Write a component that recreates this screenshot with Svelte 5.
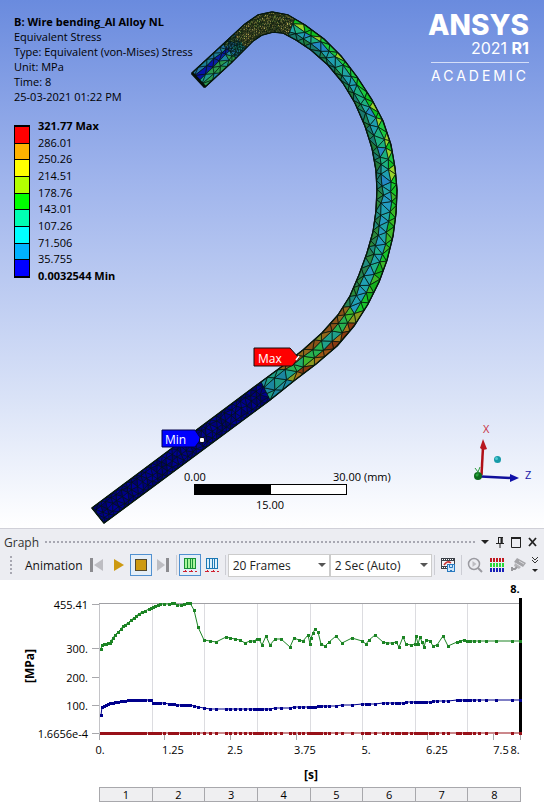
<script lang="ts">
  type Point = [number, number];

  const details = [
    "Equivalent Stress",
    "Type: Equivalent (von-Mises) Stress",
    "Unit: MPa",
    "Time: 8",
    "25-03-2021 01:22 PM",
  ];

  const bands = ["red", "orange", "yellow", "lime", "green", "mint", "cyan", "sky", "blue"];
  const levels = [
    "321.77 Max",
    "286.01",
    "250.26",
    "214.51",
    "178.76",
    "143.01",
    "107.26",
    "71.506",
    "35.755",
    "0.0032544 Min",
  ];

  // Cross sections of the wire: outer x, outer y, inner x, inner y
  const sections = [
    [192, 73, 205, 87],
    [218, 49, 231, 63],
    [232, 36, 244, 50],
    [245, 24, 253, 41],
    [258, 15, 262, 35],
    [272, 12, 273, 32],
    [288, 15, 283, 33],
    [305, 25, 296, 40],
    [324, 39, 311, 50],
    [341, 56, 328, 65],
    [357, 77, 343, 83],
    [372, 100, 355, 103],
    [383, 121, 365, 126],
    [391, 145, 372, 148],
    [395, 168, 376, 170],
    [397, 190, 377, 190],
    [396, 213, 376, 211],
    [393, 236, 373, 232],
    [387, 260, 367, 253],
    [379, 282, 359, 275],
    [368, 304, 350, 296],
    [354, 326, 338, 315],
    [337, 346, 322, 333],
    [316, 364, 303, 350],
    [295, 380, 284, 365],
    [270, 400, 261, 382],
    [104, 523, 92, 508],
  ];

  const zones = [
    { from: 0, to: 1.4, steps: 5, rows: [0, 0.25, 0.5, 0.8, 1], line: 0.6 },
    { from: 1.4, to: 6.4, steps: 27, rows: [0, 0.1, 0.22, 0.35, 0.48, 0.6, 0.74, 0.88, 1], line: 0.6 },
    { from: 6.4, to: 25, steps: 40, rows: [0, 0.3, 0.72, 1], line: 0.7 },
    { from: 25, to: 26, steps: 34, rows: [0, 0.2, 0.5, 0.8, 1], line: 0.5 },
  ];

  let seed = 7;
  function random() {
    seed = (seed * 16807) % 2147483647;
    return seed / 2147483647;
  }

  function pick(colors: string[]) {
    return colors[Math.floor(random() * colors.length)];
  }

  function at(s: number, u: number): Point {
    const i = Math.min(Math.floor(s), sections.length - 2);
    const f = s - i;
    const [ox, oy, ix, iy] = sections[i].map((v, k) => v + (sections[i + 1][k] - v) * f);
    return [ox + (ix - ox) * u, oy + (iy - oy) * u];
  }

  function stressColor(s: number, u: number) {
    if (s > 25) return pick(["#00007c", "#000088", "#00006c", "#000092"]);
    if (s < 1.4) {
      if (u > 0.25 && u < 0.55) return pick(["#0a1fa0", "#0612a8"]);
      return u < 0.3 ? pick(["#1c7f9a", "#2273a8"]) : pick(["#1f9a8a", "#2a9a50", "#1c88a4"]);
    }
    if (s < 2.2) return u > 0.5 ? pick(["#1d6fa0", "#1b8a80"]) : pick(["#1b5f80", "#5a8048"]);
    if (s < 6.4) return pick(["#a09c44", "#b5a950", "#7d9440", "#a08e44", "#c0b45c"]);
    if (s > 24) return pick(["#1b86a0", "#2390a0", "#1f9c86"]);
    if (s > 20.5) {
      if (u < 0.3) return pick(["#9c5414", "#a5741c", "#8a9a20", "#8a3a10"]);
      if (u > 0.72) return pick(["#92681c", "#7a8a24", "#8a5218"]);
      return pick(["#22ad6c", "#20a08c", "#3fb82c", "#28b050"]);
    }
    if (s > 15) {
      if (u < 0.3) return pick(["#18c42c", "#14b01c", "#3cb828"]);
      if (u > 0.72) return pick(["#258250", "#2a8a3c", "#208c80"]);
      return pick(["#20a4a8", "#249ac0", "#1fb08c", "#20a0b4"]);
    }
    if (u < 0.3) return pick(["#14cc28", "#10c020", "#1cc840", "#98d42c"]);
    if (u > 0.72) return pick(["#1f7a3c", "#1c8458", "#1a7a70"]);
    return pick(["#1f9eb0", "#2488c4", "#1cb080", "#22a4a4"]);
  }

  // Each cell of the jittered grid is split into two triangles
  function buildZone({ from, to, steps, rows, line }: (typeof zones)[number]) {
    const grid = Array.from({ length: steps + 1 }, (_, i) =>
      rows.map((u, r) => {
        const rim = r === 0 || r === rows.length - 1;
        const end = i === 0 || i === steps;
        const shift = end ? 0 : (r % 2) * 0.5 + (random() - 0.5) * 0.4;
        const s = Math.min(to, from + ((to - from) * (i + shift)) / steps);
        return at(Math.max(from, s), rim ? u : u + (random() - 0.5) * 0.12);
      }),
    );
    const cells = [];
    for (let i = 0; i < steps; i++) {
      for (let r = 0; r < rows.length - 1; r++) {
        const s = from + ((to - from) * (i + 0.5)) / steps;
        const u = (rows[r] + rows[r + 1]) / 2;
        const [a, b, c, d] = [grid[i][r], grid[i + 1][r], grid[i + 1][r + 1], grid[i][r + 1]];
        const split = r % 2 ? [[a, b, c], [a, c, d]] : [[a, b, d], [b, c, d]];
        for (const t of split) {
          cells.push({ points: t.join(" "), fill: stressColor(s, u), line });
        }
      }
    }
    return cells;
  }

  const mesh = zones.flatMap(buildZone);
  const outline = [
    ...sections.map(([x, y]) => `${x},${y}`),
    ...sections.map(([, , x, y]) => `${x},${y}`).reverse(),
  ].join(" ");

  const maxSeries: Point[] = [
    [101, 69], [102, 65], [104, 64], [106, 64], [108, 63], [110, 63], [111, 61], [113, 58], [115, 55],
    [118, 52], [121, 49], [123, 46], [125, 45], [128, 43], [131, 40], [134, 38], [136, 36], [139, 34],
    [142, 32], [145, 31], [149, 29], [151, 28], [153, 27], [155, 26], [158, 25], [160, 24], [164, 24],
    [169, 24], [172, 23], [174, 23], [177, 25], [181, 25], [184, 24], [187, 23], [190, 23], [194, 30],
    [198, 47], [204, 60], [210, 61], [216, 62], [226, 57], [230, 58], [235, 59], [240, 60], [245, 63],
    [250, 61], [254, 61], [257, 59], [259, 59], [262, 65], [266, 56], [270, 65], [275, 59], [281, 59],
    [290, 67], [294, 58], [299, 60], [303, 61], [308, 55], [310, 64], [311, 58], [313, 53], [315, 49],
    [318, 52], [321, 64], [325, 66], [329, 62], [336, 56], [342, 63], [352, 58], [362, 61], [366, 64],
    [369, 60], [375, 55], [383, 62], [387, 63], [392, 63], [396, 62], [399, 67], [403, 57], [406, 64],
    [411, 65], [415, 64], [416, 56], [418, 64], [420, 57], [422, 62], [424, 67], [426, 60], [430, 61],
    [433, 66], [437, 65], [443, 56], [448, 66], [457, 62], [460, 61], [464, 60], [467, 61], [470, 61],
    [474, 61], [479, 61], [486, 61], [496, 61], [512, 61], [520, 61],
  ];

  const averageKeys: Point[] = [
    [101, 135], [102, 127], [105, 125], [108, 124], [115, 122], [130, 120], [151, 120], [152, 123],
    [160, 123], [180, 125], [192, 125], [204, 128], [212, 129], [260, 129], [300, 127], [330, 126],
    [362, 124], [420, 122], [467, 120], [520, 120],
  ];

  function averageAt(x: number) {
    const i = Math.max(1, averageKeys.findIndex(([kx]) => kx >= x));
    const [x0, y0] = averageKeys[i - 1];
    const [x1, y1] = averageKeys[i];
    return Math.round(y0 + ((y1 - y0) * (x - x0)) / (x1 - x0));
  }

  const series = [
    { name: "max", points: maxSeries },
    { name: "average", points: maxSeries.map(([x]): Point => [x, averageAt(x)]) },
    { name: "min", points: maxSeries.map(([x]): Point => [x, 153]) },
  ];

  const yTicks = [
    { y: 24, label: "455.41" },
    { y: 68, label: "300." },
    { y: 97, label: "200." },
    { y: 125, label: "100." },
    { y: 153, label: "1.6656e-4" },
  ];
  const xTicks = [
    { x: 99, tx: 100, label: "0." },
    { x: 164, tx: 173, label: "1.25" },
    { x: 230, tx: 235, label: "2.5" },
    { x: 296, tx: 305, label: "3.75" },
    { x: 362, tx: 366, label: "5." },
    { x: 427, tx: 437, label: "6.25" },
    { x: 493, tx: 501, label: "7.5" },
    { x: 520, tx: 515, label: "8." },
  ];
  const gridLines = [152, 204, 257, 310, 362, 415, 467];
  const steps = [1, 2, 3, 4, 5, 6, 7, 8];

  let frames = $state("20 Frames");
  let duration = $state("2 Sec (Auto)");
</script>

<main class="workbench">
  <section class="viewport">
    <svg class="scene" viewBox="0 0 544 528" role="img" aria-label="Wire stress plot">
      <polygon points={outline} fill="#123" stroke="#06120c" stroke-width="1.4" stroke-linejoin="round" />
      {#each mesh as cell}
        <polygon points={cell.points} fill={cell.fill} stroke="#04140c" stroke-width={cell.line} stroke-linejoin="round" />
      {/each}
      <polygon points={outline} fill="none" stroke="#06180c" stroke-width="1.2" stroke-linejoin="round" />
      <path d="M192 73L205 87" stroke="#051008" stroke-width="3" />

      <path d="M254 348H290L299 358L292 366H254Z" fill="#f00" stroke="#111" />
      <path d="M296 360L299 356" stroke="#fff" stroke-width="1.5" />
      <text x="258" y="363" class="flag">Max</text>
      <path d="M162 430H195L201 439L195 447H162Z" fill="#00f" stroke="#00004c" />
      <circle cx="202" cy="440" r="3" fill="#111" />
      <rect x="200" y="438" width="4" height="4" rx="1" fill="#fff" />
      <text x="165" y="444" class="flag">Min</text>

      <rect x="194.5" y="484.5" width="152" height="10" fill="#fff" stroke="#000" />
      <rect x="194" y="484" width="77" height="11" />
      <text x="184" y="481">0.00</text>
      <text x="333" y="481">30.00 (mm)</text>
      <text x="256" y="509">15.00</text>

      <path d="M481.500 475L483 447" stroke="#b01018" stroke-width="2.500" />
      <path d="M483 439L487 449Q483 451 480 448Z" fill="#b81820" />
      <path d="M481 476.500L511 478" stroke="#10109c" stroke-width="2.500" />
      <path d="M510 474L519 478L510 482Z" fill="#1010a8" />
      <circle cx="478" cy="476" r="4" fill="#0c6a1c" />
      <circle cx="477" cy="475" r="1.500" fill="#28a83c" />
      <path d="M475 468L478 472L480 467M478 472V475" fill="none" stroke="#2a9a3c" />
      <circle cx="497.500" cy="459.500" r="3.500" fill="#159aa8" />
      <circle cx="496.500" cy="458.500" r="1.500" fill="#50c8d0" />
      <text x="483" y="433" class="axis-x">X</text>
      <text x="525" y="479" class="axis-z">Z</text>
    </svg>

    <div class="overlay">
      <div class="top">
        <div class="info">
          <strong>B: Wire bending_Al Alloy NL</strong>
          {#each details as line}
            <span>{line}</span>
          {/each}
        </div>
        <div class="brand">
          <span class="brand-name">ANSYS</span>
          <span class="brand-release">2021 <b>R1</b></span>
          <span class="brand-edition">ACADEMIC</span>
        </div>
      </div>
      <div class="legend">
        <div class="scale">
          {#each bands as band}
            <i class={band}></i>
          {/each}
        </div>
        <div class="levels">
          {#each levels as level}
            <span>{level}</span>
          {/each}
        </div>
      </div>
    </div>
  </section>

  <section class="graph">
    <header class="titlebar">
      <span>Graph</span>
      <div class="grip"></div>
      <button aria-label="Menu">
        <svg width="10" height="14"><path d="M1 5H9L5 9Z" fill="#222" /></svg>
      </button>
      <button aria-label="Pin">
        <svg width="10" height="14" fill="none" stroke="#222"><path d="M3 2.500H8M3.500 2V8M7 2V8M1 8.500H9M5 9V13" /><path d="M6.500 3V8" stroke-width="2" /></svg>
      </button>
      <button aria-label="Maximize">
        <svg width="12" height="14"><path d="M1.500 3V12.500H10.500V3Z" fill="none" stroke="#222" /><path d="M1 3H11" stroke="#222" stroke-width="2" /></svg>
      </button>
      <button aria-label="Close">
        <svg width="11" height="14"><path d="M2 3L9 11M9 3L2 11" stroke="#222" stroke-width="1.800" /></svg>
      </button>
    </header>

    <div class="toolbar">
      <div class="handle"></div>
      <span class="caption">Animation</span>
      <button class="tool" aria-label="Previous">
        <svg width="16" height="16"><path d="M1 1H4V15H1Z" fill="#8c8c90" /><path d="M14 2V14L5 8Z" fill="#bdbdc2" /></svg>
      </button>
      <button class="tool" aria-label="Play">
        <svg width="16" height="16"><path d="M3 2L13 8L3 14Z" fill="#cd9a12" /></svg>
      </button>
      <button class="tool active" aria-label="Stop">
        <svg width="16" height="16"><rect x="2.500" y="2.500" width="11" height="11" fill="#cd9a12" stroke="#54482c" /></svg>
      </button>
      <button class="tool" aria-label="Next">
        <svg width="16" height="16"><path d="M11 1H14V15H11Z" fill="#8c8c90" /><path d="M2 2V14L10 8Z" fill="#bdbdc2" /></svg>
      </button>
      <i class="rule"></i>
      <button class="tool active" aria-label="Distributed">
        <svg width="16" height="16"><rect x="2.500" y="1.500" width="11" height="10" fill="#a8f59c" stroke="#189038" /><path d="M5.500 1V12M8.500 1V12M10.500 1V12" stroke="#189038" /><path d="M1 14.500H5M7 14.500H11M13 14.500H15M3.500 13V15M9.500 13V15" stroke="#d02030" /></svg>
      </button>
      <button class="tool" aria-label="Result sets">
        <svg width="16" height="16"><rect x="2.500" y="1.500" width="11" height="10" fill="#dff1fb" stroke="#1c78b4" /><path d="M5.500 1V12M8.500 1V12M10.500 1V12" stroke="#1c78b4" /><path d="M1 14.500H5M7 14.500H11M13 14.500H15M3.500 13V15M9.500 13V15" stroke="#d02030" /></svg>
      </button>
      <i class="rule"></i>
      <div class="field">
        <select aria-label="Frames" bind:value={frames}>
          <option>20 Frames</option>
        </select>
      </div>
      <div class="field">
        <select aria-label="Duration" bind:value={duration}>
          <option>2 Sec (Auto)</option>
        </select>
      </div>
      <i class="rule"></i>
      <button class="tool" aria-label="Export video">
        <svg width="16" height="16"><rect x="1" y="1" width="14" height="11" fill="#3b4048" /><path d="M2 2.500H14M2 10.500H7" stroke="#fff" stroke-dasharray="1 1" /><rect x="2" y="4" width="12" height="5" fill="#f4f4f6" /><path d="M4 8Q7 3 11 6" fill="none" stroke="#c83030" stroke-width="1.500" /><rect x="7.500" y="7.500" width="7" height="7" fill="#cfe6f8" stroke="#2a7ac0" /><path d="M9.500 8V10.500H12.500V8M10 13.500H12" fill="none" stroke="#2a7ac0" /></svg>
      </button>
      <i class="rule"></i>
      <button class="tool" aria-label="Zoom to fit">
        <svg width="16" height="16" fill="none" stroke="#9a9aa0"><circle cx="7" cy="7" r="5.500" stroke-width="1.500" /><path d="M11 11L15 15" stroke-width="2" /><path d="M5.500 4L9.500 7L5.500 10Z" fill="#bdbdc2" stroke="none" /></svg>
      </button>
      <button class="tool" aria-label="Contours">
        <svg width="16" height="16" stroke-width="4" stroke-dasharray="2 1"><path d="M1 3H15" stroke="#c01820" /><path d="M1 8H15" stroke="#28d838" /><path d="M1 13H15" stroke="#1820b8" /></svg>
      </button>
      <button class="tool" aria-label="Probe">
        <svg width="16" height="16"><path d="M6 1L15 6L12 10L3 5Z" fill="#a4a4a8" /><path d="M4 6L10 10L8 12L3 9Z" fill="#b4b4b8" /><path d="M8 4L13 7" stroke="#d8d8dc" /><path d="M6 10L4 12H1M1 10V14" fill="none" stroke="#98989c" stroke-width="2" /></svg>
      </button>
      <button class="more" aria-label="More tools">
        <svg width="8" height="18"><path d="M1 1L4 4L7 1M1 4L4 7L7 4" fill="none" stroke="#333" /><path d="M1 13H7L4 16Z" fill="#222" /></svg>
      </button>
    </div>

    <svg class="chart" viewBox="0 0 544 207" role="img" aria-label="Stress over time">
      {#each gridLines as x}
        <path d="M{x}.5 24V153" stroke="#dcdce0" />
      {/each}
      <path d="M99.500 24V160" stroke="#c4c4c8" />
      <path d="M99 23.500H520" stroke="#a0a0a4" />
      {#each yTicks as tick}
        <path d="M92 {tick.y}.5H99" stroke="#a8a8ac" />
        <text x="88" y={tick.y + 5} text-anchor="end">{tick.label}</text>
      {/each}
      {#each xTicks as tick}
        <path d="M{tick.x}.5 154V160" stroke="#a8a8ac" />
        <text x={tick.tx} y="174" text-anchor="middle">{tick.label}</text>
      {/each}
      <rect x="519" y="18" width="3" height="135" />
      <text x="515" y="13" text-anchor="middle" class="bold">8.</text>
      {#each series as line}
        <g class={line.name}>
          <polyline points={line.points.join(" ")} />
          {#each line.points as [x, y]}
            <rect x={x - 1} y={y - 1} width="3" height="3" />
          {/each}
        </g>
      {/each}
      <text class="bold title" text-anchor="middle" transform="translate(34 86) rotate(-90)">[MPa]</text>
      <text class="bold title" text-anchor="middle" x="311" y="199">[s]</text>
    </svg>

    <div class="steps">
      {#each steps as step}
        <span>{step}</span>
      {/each}
    </div>
  </section>
</main>

<style>
  :global(body) {
    margin: 0;
    background: #fff;
  }

  .workbench {
    font-family: "Open Sans", "Noto Sans", sans-serif;
    font-size: 11px;
    line-height: 15px;
    color: #000;
  }

  .viewport {
    display: grid;
    background: linear-gradient(#6a8bde, #9fb4ec 34%, #d9e2f7 75%, #fff);
  }

  .scene,
  .overlay {
    grid-area: 1 / 1;
  }

  .scene,
  .chart {
    display: block;
    width: 100%;
    height: auto;
  }

  .flag {
    font-size: 12px;
    fill: #fff;
  }

  .axis-x {
    fill: #c83040;
  }

  .axis-z {
    fill: #2020a8;
  }

  .overlay {
    padding: 14px 15px 0 14px;
  }

  .top {
    display: flex;
    justify-content: space-between;
  }

  .info {
    display: flex;
    flex-direction: column;
  }

  .brand {
    display: flex;
    flex-direction: column;
    align-items: flex-end;
    font-family: Inter, "Open Sans", sans-serif;
    color: #fff;
  }

  .brand-name {
    font-size: 28px;
    line-height: 22px;
    font-weight: 800;
  }

  .brand-release {
    font-size: 16px;
    line-height: 24px;
  }

  .brand-edition {
    margin-top: 2px;
    padding-top: 4px;
    border-top: 1px solid #d4def8;
    font-size: 14px;
    line-height: 18px;
    letter-spacing: 3px;
  }

  .legend {
    display: flex;
    gap: 8px;
    margin-top: 14px;
  }

  .scale {
    display: flex;
    flex-direction: column;
    gap: 1px;
    width: 14px;
    height: 149px;
    margin-top: 7px;
    border: 1px solid #000;
    border-width: 2px 1px;
    background: #000;
  }

  .scale i {
    flex: 1;
  }

  .red { background: #f00; }
  .orange { background: #ffb200; }
  .yellow { background: #ff0; }
  .lime { background: #b2ff00; }
  .green { background: #0f0; }
  .mint { background: #00ffb2; }
  .cyan { background: #0ff; }
  .sky { background: #00b2ff; }
  .blue { background: #00f; }

  .levels {
    display: flex;
    flex-direction: column;
    justify-content: space-between;
    height: 165px;
  }

  .levels span:first-child,
  .levels span:last-child {
    font-weight: 700;
  }

  .titlebar,
  .toolbar {
    display: flex;
    align-items: center;
    background: #ecedf2;
    color: #333;
  }

  .titlebar {
    gap: 5px;
    height: 20px;
    padding: 3px 6px 0 4px;
    border-top: 1px solid #d0d0d8;
    font-size: 12px;
  }

  button {
    display: flex;
    flex: none;
    justify-content: center;
    align-items: center;
    padding: 0;
    border: 0;
    background: none;
  }

  .grip,
  .handle {
    background-image: radial-gradient(#a8a8b2 1px, transparent 1px);
    background-size: 4px 4px;
  }

  .grip {
    flex: 1;
    height: 5px;
  }

  .toolbar {
    height: 26px;
    padding: 0 4px 2px 9px;
  }

  .handle {
    width: 5px;
    height: 20px;
  }

  .caption {
    margin: 0 3px 0 11px;
    font-size: 12px;
    color: #111;
  }

  .tool {
    box-sizing: border-box;
    width: 22px;
    height: 22px;
  }

  .active {
    border: 1px solid #5090d0;
    background: #e4eef8;
  }

  .rule {
    flex: none;
    width: 1px;
    height: 20px;
    margin: 0 2px;
    background: #cccdd4;
  }

  .field {
    display: flex;
    flex: 1;
    align-items: center;
    position: relative;
    min-width: 0;
  }

  .field::after {
    content: "";
    position: absolute;
    right: 4px;
    border: 4px solid transparent;
    border-top-color: #555;
    border-bottom: 0;
    pointer-events: none;
  }

  select {
    width: 100%;
    height: 23px;
    padding: 0 14px 0 4px;
    border: 1px solid #ccc;
    border-radius: 0;
    appearance: none;
    background: #fff;
    color: #222;
    font: 12px "Open Sans", "Noto Sans", sans-serif;
  }

  .more {
    width: 10px;
  }

  .chart {
    fill: #000;
  }

  .bold {
    font-weight: 700;
  }

  .title {
    font-size: 12px;
  }

  polyline {
    fill: none;
  }

  .max { fill: #1c8424; }
  .max polyline { stroke: #1c8424; }
  .average { fill: #00008c; }
  .average polyline { stroke: #00008c; }
  .min { fill: #981018; }
  .min polyline { stroke: #981018; }

  .steps {
    display: flex;
    margin: 0 4.2% 8px 18.2%;
    border: 1px solid #a8a8ac;
  }

  .steps span {
    flex: 1;
    background: #efeff1;
    font-size: 11px;
    line-height: 13px;
    text-align: center;
  }

  .steps span + span {
    border-left: 1px solid #a8a8ac;
  }
</style>
